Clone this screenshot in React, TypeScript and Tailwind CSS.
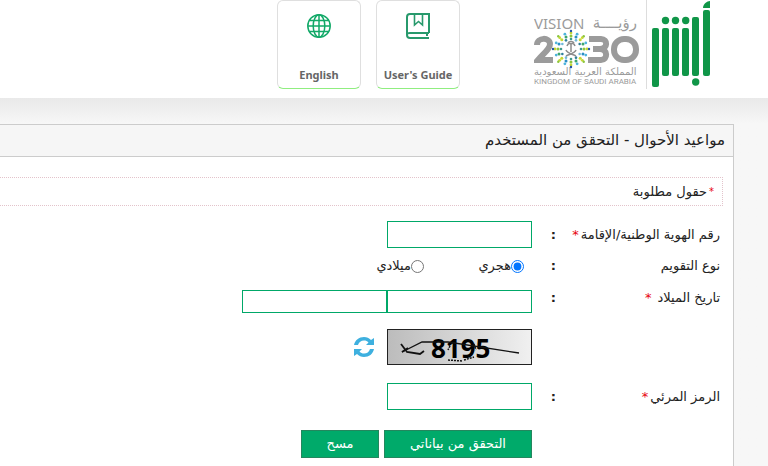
import { useState } from "react";
import type { ReactNode } from "react";

const dots = [
    { r: 10, n: 12, size: 1.3, colors: ["#3f9a8c", "#6fb9d8", "#2f7f9c"] },
    { r: 13, n: 16, size: 1.5, colors: ["#8cc63f", "#2b8fc4", "#c8d832", "#3fa66b"] },
    { r: 16, n: 16, size: 1.4, colors: ["#c8d832", "#4db4dc"] },
    { r: 18, n: 8, size: 1.2, colors: ["#2456a6", "#8cc63f"] }
];

function VisionLogo() {
    return (
        <svg width="108" height="88" viewBox="0 0 108 88" direction="ltr" role="img" aria-label="Vision 2030">
            <g fill="#9b9b9b">
                <text x="0" y="29" fontSize="15" fontFamily="Noto Sans, sans-serif">VISION</text>
                <text x="103" y="28" fontSize="15" textAnchor="end" fontFamily="DejaVu Sans, sans-serif">رؤيــــة</text>
                <text x="0" y="75" fontSize="10" fontFamily="DejaVu Sans, sans-serif">المملكة العربية السعودية</text>
                <text x="0" y="84" fontSize="8" fontFamily="Roboto, sans-serif">KINGDOM OF SAUDI ARABIA</text>
            </g>
            <g fill="none" stroke="#9b9b9b" strokeWidth="6">
                <path d="M3 45C3 37 16 37 16 44C16 49 10 53 4 60H19" />
                <path d="M55 39H67C74 39 74 49 66 49H59M66 49C74 49 74 60 67 60H54" />
                <rect x="80" y="39" width="22" height="21" rx="10" />
            </g>
            {dots.map((ring) =>
                Array.from({ length: ring.n }, (_, i) => {
                    const angle = (i / ring.n) * Math.PI * 2;
                    return (
                        <circle
                            key={`${ring.r}-${i}`}
                            cx={37 + Math.cos(angle) * ring.r}
                            cy={49 + Math.sin(angle) * ring.r}
                            r={ring.size}
                            fill={ring.colors[i % ring.colors.length]}
                        />
                    );
                })
            )}
            <g fill="none" stroke="#8d8d8d" strokeWidth="1.500">
                <path d="M37 43V52M33 46C34 43 36 43 37 44C38 43 40 43 41 46M34 43C35 41 39 41 40 43" />
                <path d="M32 50C33 53 38 54 42 56M42 50C41 53 36 54 32 56" />
            </g>
        </svg>
    );
}

function AbsherLogo() {
    return (
        <svg width="60" height="88" viewBox="0 0 60 88" fill="#109648" role="img" aria-label="أبشر">
            <rect x="1" y="28" width="7" height="59" rx="2" />
            <rect x="11" y="28" width="7" height="48" rx="2" />
            <rect x="21" y="28" width="7" height="48" rx="2" />
            <rect x="31" y="28" width="7" height="48" rx="2" />
            <rect x="41" y="17" width="7" height="59" rx="2" />
            <rect x="52" y="10" width="7" height="66" rx="2" />
            <path d="M52 8C52 4 56 1 59 1V8Z" />
            <circle cx="14.500" cy="20.500" r="3.700" />
            <circle cx="24.500" cy="20.500" r="3.700" />
            <circle cx="34.700" cy="20.500" r="3.700" />
            <circle cx="44.700" cy="82" r="3.700" />
        </svg>
    );
}

function GlobeIcon() {
    return (
        <svg width="24" height="26" viewBox="0 0 24 24" fill="none" stroke="#12a968" strokeWidth="1.500">
            <circle cx="12" cy="12" r="11.200" />
            <ellipse cx="12" cy="12" rx="5.800" ry="11.200" />
            <path d="M12 1V23M1 12H23M2.500 6.500H21.500M2.500 17.500H21.500" />
        </svg>
    );
}

function GuideIcon() {
    return (
        <svg width="24" height="26" viewBox="0 0 24 26" fill="none" stroke="#27996c" strokeWidth="2">
            <path d="M23 20V1H4C2 1 1 2 1 4V22C1 24 2 25 4 25H23" />
            <path d="M1 22C1 20 2 20 4 20H23M21 20V23" />
            <path d="M8.500 1V12L12.500 8.500L16.500 12V1" strokeWidth="1.600" />
        </svg>
    );
}

function RefreshIcon() {
    return (
        <svg width="20" height="20" viewBox="0 0 20 20" fill="#3eb0df">
            <path d="M0 8C1 3 5 0 10 0C13 0 15 1 17 3L20 1V8H12L14.500 5.500C13 4 12 3.500 10 3.500C7 3.500 5 5 4 8Z" />
            <path d="M20 12C19 17 15 20 10 20C7 20 5 19 3 17L0 19V12H8L5.500 14.500C7 16 8 16.500 10 16.500C13 16.500 15 15 16 12Z" />
        </svg>
    );
}

function Captcha() {
    return (
        <svg
            viewBox="0 0 143 34"
            direction="ltr"
            className="h-9 w-[145px] overflow-visible border border-[#222] bg-linear-to-r from-[#bcbcbc] to-[#f0f0f0]"
        >
            <text x="43" y="28" fontSize="26" fontWeight="bold" fontFamily="Noto Sans, sans-serif">
                8195
            </text>
            <g fill="none" stroke="#111" strokeWidth="1.300">
                <path d="M14 22L34 12H60L131 23" />
                <path d="M13 14L19 22L32 24L36 21M14 22L20 18" strokeWidth="1.800" />
                <path d="M60 30L74 31M62 16L60 20M76 30L86 27M86 14L88 20" strokeWidth="1.500" strokeDasharray="2 1" />
            </g>
        </svg>
    );
}

interface HeaderLinkProps {
    label: string;
    icon: ReactNode;
}

function HeaderLink({ label, icon }: HeaderLinkProps) {
    return (
        <a
            href="#"
            className="flex h-[89px] w-21 flex-col items-center justify-between rounded-md border border-[#dfdfdf] border-b-[#90ee80] pt-3 pb-1 font-['Noto_Sans'] text-[11px] leading-[18px] font-bold whitespace-nowrap text-[#666]"
        >
            {icon}
            <span>{label}</span>
        </a>
    );
}

interface FieldRowProps {
    id: string;
    label: string;
    required?: boolean;
    top?: boolean;
    children: ReactNode;
}

function FieldRow({ id, label, required, top, children }: FieldRowProps) {
    return (
        <div className={`grid grid-cols-[164px_24px_1fr] ${top ? "items-start" : "items-center"}`}>
            <label htmlFor={id} className={`flex items-center whitespace-nowrap ${top ? "gap-1.5" : "gap-0.5"}`}>
                <span>{label}</span>
                {required && <span className="text-red-600">*</span>}
            </label>
            <span className="font-bold">:</span>
            <div className="flex items-center">{children}</div>
        </div>
    );
}

const inputClass = "w-[145px] border border-[#00a868] bg-white px-1 outline-none";

export default function App() {
    const [calendar, setCalendar] = useState("hijri");

    return (
        <div
            dir="rtl"
            className="min-h-screen overflow-hidden bg-[#f7f7f7] font-[DejaVu_Sans,sans-serif] text-[13px] leading-4 text-[#222]"
        >
            <header className="flex h-[98px] bg-white ps-[57px]">
                <AbsherLogo />
                <div className="ms-1 h-[89px] w-px bg-[#ddd]" />
                <div className="ms-1">
                    <VisionLogo />
                </div>
                <nav className="ms-[74px] flex gap-[15px]">
                    <HeaderLink label="User's Guide" icon={<GuideIcon />} />
                    <HeaderLink label="English" icon={<GlobeIcon />} />
                </nav>
            </header>

            <div className="bg-linear-to-b from-[#e9e9e9] to-[#f7f7f7] to-[26px] ps-[34px] pt-[26px]">
                <main className="min-h-[342px] border-s border-t border-[#ccc] bg-white pb-2">
                    <h1 className="border-b border-[#ccc] bg-[#f6f6f6] px-2 text-[15px] leading-[31px]">
                        مواعيد الأحوال - التحقق من المستخدم
                    </h1>

                    <p className="ms-2.5 mt-5 flex h-[29px] items-center gap-0.5 border-y border-s border-dotted border-[#e3c3cb] ps-2">
                        <span className="text-[10px] text-red-600">*</span>
                        <span>حقول مطلوبة</span>
                    </p>

                    <form className="ps-[13px] pt-[15px]" onSubmit={(e) => e.preventDefault()}>
                        <FieldRow id="nationalId" label="رقم الهوية الوطنية/الإقامة" required>
                            <input id="nationalId" type="text" className={`${inputClass} h-[27px]`} />
                        </FieldRow>

                        <div className="py-2.5">
                            <FieldRow id="hijri" label="نوع التقويم">
                                <div className="flex ps-2">
                                    <label className="flex w-[100px] items-center">
                                        <input
                                            id="hijri"
                                            type="radio"
                                            name="calendar"
                                            className="size-[13px]"
                                            checked={calendar === "hijri"}
                                            onChange={() => setCalendar("hijri")}
                                        />
                                        هجري
                                    </label>
                                    <label className="flex items-center">
                                        <input
                                            type="radio"
                                            name="calendar"
                                            className="size-[13px]"
                                            checked={calendar === "gregorian"}
                                            onChange={() => setCalendar("gregorian")}
                                        />
                                        ميلادي
                                    </label>
                                </div>
                            </FieldRow>
                        </div>

                        <div className="pt-1.5">
                            <FieldRow id="birthDate" label="تاريخ الميلاد" required top>
                                <input id="birthDate" type="text" className={`${inputClass} h-[23px]`} />
                                <input aria-label="تاريخ الميلاد" type="text" className={`${inputClass} h-[23px]`} />
                            </FieldRow>
                        </div>

                        <div className="flex items-center gap-[13px] ps-[188px] pt-4">
                            <Captcha />
                            <button type="button" aria-label="تحديث">
                                <RefreshIcon />
                            </button>
                        </div>

                        <div className="pt-[18px]">
                            <FieldRow id="captcha" label="الرمز المرئي" required>
                                <input id="captcha" type="text" className={`${inputClass} h-[27px]`} />
                            </FieldRow>
                        </div>

                        <div className="flex gap-[5px] ps-[188px] pt-5 text-white">
                            <button type="submit" className="h-7 w-[148px] border border-[#24875e] bg-[#00aa6a]">
                                التحقق من بياناتي
                            </button>
                            <button type="reset" className="h-7 w-[78px] border border-[#24875e] bg-[#00aa6a]">
                                مسح
                            </button>
                        </div>
                    </form>
                </main>
            </div>
        </div>
    );
}
